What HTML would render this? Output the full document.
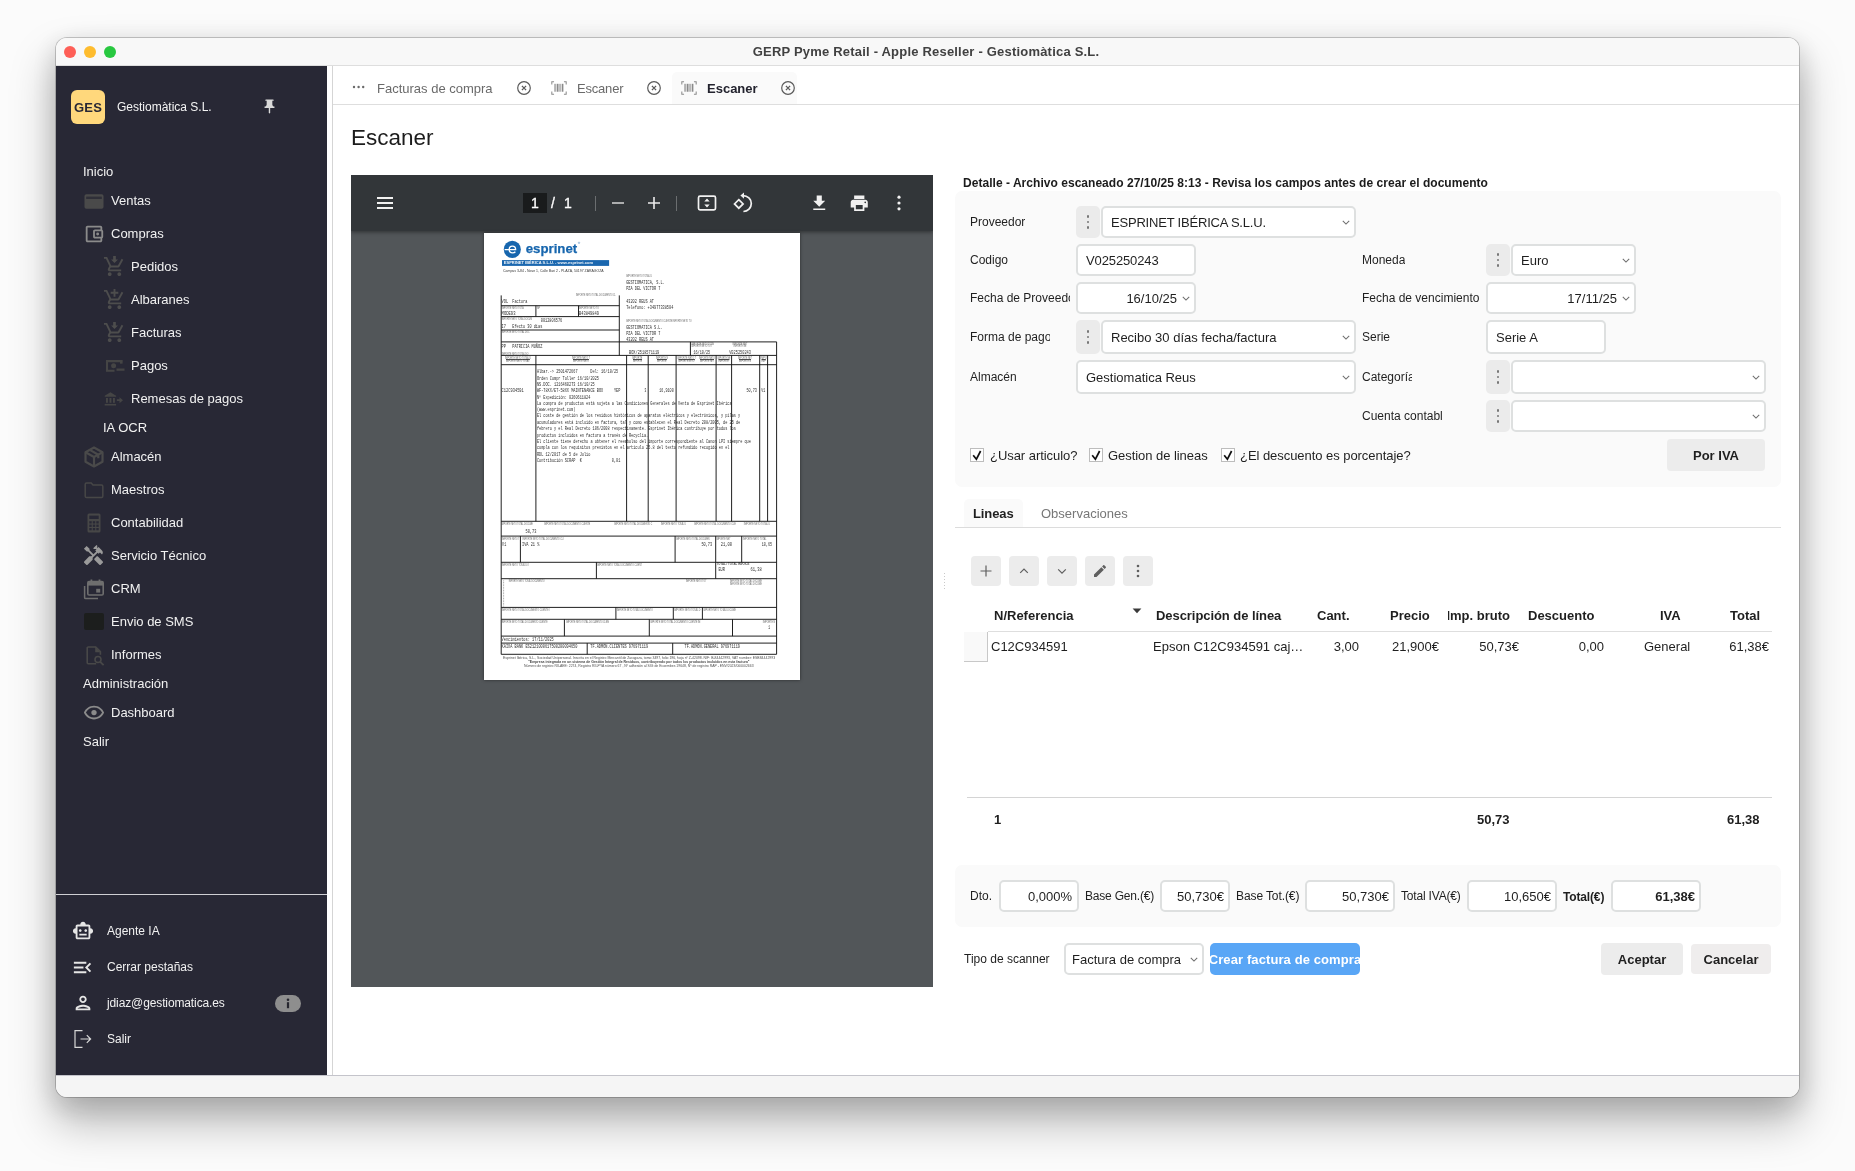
<!DOCTYPE html>
<html lang="es">
<head>
<meta charset="utf-8">
<title>GERP Pyme Retail - Apple Reseller - Gestiomàtica S.L.</title>
<style>
*{box-sizing:border-box;margin:0;padding:0}
html,body{width:1855px;height:1171px;overflow:hidden;background:#fbfbfb;font-family:"Liberation Sans",sans-serif;color:#1f1f1f;font-size:13px}
.abs{position:absolute}
#win{position:absolute;left:56px;top:38px;width:1743px;height:1059px;border-radius:11px;background:#fff;will-change:transform;
 box-shadow:0 0 0 1px rgba(0,0,0,.20),0 24px 44px 2px rgba(0,0,0,.27),0 8px 26px 3px rgba(0,0,0,.12);overflow:hidden}
#titlebar{position:absolute;left:0;top:0;width:100%;height:28px;background:#f8f8f8;border-bottom:1px solid #dedede}
#titlebar .t{position:absolute;left:0;right:3px;top:6px;text-align:center;font-weight:bold;font-size:13px;letter-spacing:.2px;color:#414141}
.tl{position:absolute;top:8px;width:12px;height:12px;border-radius:50%}
#side{position:absolute;left:0;top:28px;width:271px;height:1009px;background:#282835;color:#f1f1f1}
#status{position:absolute;left:0;top:1037px;width:100%;height:22px;background:#f5f5f5;border-top:1px solid #c4c4cb}
#vsep{position:absolute;left:276px;top:28px;width:1px;height:1009px;background:#d5d5d5}
.mi{position:absolute;left:27px;font-size:13px;white-space:nowrap;color:#f1f1f1}
.ic{position:absolute}
.bi{position:absolute;left:51px;font-size:12px;white-space:nowrap;color:#f1f1f1}
</style>
</head>
<body>
<div id="win">
<div id="titlebar">
 <div class="tl" style="left:8px;background:#fe5f57"></div>
 <div class="tl" style="left:28px;background:#febc2e"></div>
 <div class="tl" style="left:48px;background:#28c840"></div>
 <div class="t">GERP Pyme Retail - Apple Reseller - Gestiomàtica S.L.</div>
</div>
<div id="side">
 <div class="abs" style="left:15px;top:24px;width:34px;height:34px;border-radius:6px;background:#ffd87c;color:#282835;font-weight:bold;font-size:13px;text-align:center;line-height:35px;letter-spacing:.2px">GES</div>
 <div class="abs" style="left:61px;top:34px;font-size:12px;line-height:15px;color:#f4f4f4;white-space:nowrap">Gestiomàtica S.L.</div>
 <svg class="ic" style="left:205px;top:32px" width="17" height="17" viewBox="0 0 24 24"><path fill="#d9d9d9" d="M16,9V4l1,0c0.550,0,1-0.450,1-1v0c0-0.550-0.450-1-1-1H7C6.450,2,6,2.450,6,3v0c0,0.550,0.450,1,1,1l1,0v5c0,1.660-1.340,3-3,3h0v2h5.970v7l1,1l1-1v-7H19v-2h0C17.340,12,16,10.660,16,9z"/></svg>

 <div class="mi" style="top:98px;line-height:16px">Inicio</div>

 <!-- Ventas -->
 <svg class="ic" style="left:28px;top:128px" width="20" height="15" viewBox="0 0 20 15"><rect x=".5" y=".3" width="19" height="14.4" rx="1.8" fill="#4a4a4a"/><rect x="2.2" y="2.6" width="15.6" height="2.4" fill="#2f2f38"/></svg>
 <div class="mi" style="left:55px;top:127px;line-height:16px">Ventas</div>

 <!-- Compras -->
 <svg class="ic" style="left:27px;top:157px" width="22" height="22" viewBox="0 0 24 24"><path fill="#8b8b8b" d="M21 7.280V5c0-1.100-.9-2-2-2H5c-1.110 0-2 .9-2 2v14c0 1.100.890 2 2 2h14c1.100 0 2-.9 2-2v-2.280c.590-.350 1-.980 1-1.720V9c0-.740-.410-1.370-1-1.720zM20 9v6h-7V9h7zM5 19V5h14v2h-6c-1.100 0-2 .9-2 2v6c0 1.100.9 2 2 2h6v2H5z"/><circle cx="16" cy="12" r="1.600" fill="#8b8b8b"/></svg>
 <div class="mi" style="left:55px;top:160px;line-height:16px">Compras</div>

 <!-- Pedidos -->
 <svg class="ic" style="left:47px;top:189px" width="23" height="23" viewBox="0 0 24 24"><g fill="#4d4d4d"><path d="M7 18c-1.100 0-1.990.9-1.990 2S5.900 22 7 22s2-.9 2-2-.9-2-2-2zm10 0c-1.100 0-1.990.9-1.990 2s.890 2 1.990 2 2-.9 2-2-.9-2-2-2zm-9.830-3.250l.03-.12.9-1.630h7.450c.750 0 1.410-.410 1.750-1.030l3.860-7.010L19.420 4h-.01l-1.100 2-2.760 5H8.530l-.13-.270L6.160 6l-.95-2-.94-2H1v2h2l3.600 7.590-1.350 2.450c-.160.280-.250.610-.250.960 0 1.100.9 2 2 2h12v-2H7.420c-.130 0-.250-.110-.250-.250z"/><path d="M10.600 1h2.800v3.600h2.200L12 8.400 8.400 4.600h2.200z"/></g></svg>
 <div class="mi" style="left:75px;top:193px;line-height:16px">Pedidos</div>

 <!-- Albaranes -->
 <svg class="ic" style="left:47px;top:222px" width="23" height="23" viewBox="0 0 24 24"><path fill="#4d4d4d" d="M11 9h2V6h3V4h-3V1h-2v3H8v2h3v3zm-4 9c-1.100 0-1.990.9-1.990 2S5.900 22 7 22s2-.9 2-2-.9-2-2-2zm10 0c-1.100 0-1.990.9-1.990 2s.890 2 1.990 2 2-.9 2-2-.9-2-2-2zm-9.830-3.250l.03-.12.9-1.630h7.450c.750 0 1.410-.410 1.750-1.030l3.860-7.010L19.420 4h-.01l-1.100 2-2.760 5H8.530l-.13-.270L6.160 6l-.95-2-.94-2H1v2h2l3.600 7.590-1.350 2.450c-.160.280-.250.610-.250.960 0 1.100.9 2 2 2h12v-2H7.420c-.130 0-.250-.110-.250-.250z"/></svg>
 <div class="mi" style="left:75px;top:226px;line-height:16px">Albaranes</div>

 <!-- Facturas -->
 <svg class="ic" style="left:47px;top:255px" width="23" height="23" viewBox="0 0 24 24"><g fill="#4d4d4d"><path d="M7 18c-1.100 0-1.990.9-1.990 2S5.900 22 7 22s2-.9 2-2-.9-2-2-2zm10 0c-1.100 0-1.990.9-1.990 2s.890 2 1.990 2 2-.9 2-2-.9-2-2-2zm-9.830-3.250l.03-.12.9-1.630h7.450c.750 0 1.410-.410 1.750-1.030l3.860-7.010L19.420 4h-.01l-1.100 2-2.760 5H8.530l-.13-.270L6.160 6l-.95-2-.94-2H1v2h2l3.600 7.590-1.350 2.450c-.160.280-.250.610-.250.960 0 1.100.9 2 2 2h12v-2H7.420c-.130 0-.250-.110-.250-.250z"/><path d="M10.600 1h2.800v3.600h2.200L12 8.400 8.400 4.600h2.200z"/></g></svg>
 <div class="mi" style="left:75px;top:259px;line-height:16px">Facturas</div>

 <!-- Pagos -->
 <svg class="ic" style="left:49px;top:293px" width="20" height="14" viewBox="0 0 20 14"><g fill="none" stroke="#454545" stroke-width="2.100"><path d="M17.200 2.100H2v9.600h7.500"/></g><circle cx="8.600" cy="6.800" r="2.500" fill="#454545"/><rect x="15" y="1.050" width="2.600" height="3.600" fill="#454545"/><rect x="11.500" y="9.500" width="8" height="2.300" fill="#454545"/></svg>
 <div class="mi" style="left:75px;top:292px;line-height:16px">Pagos</div>

 <!-- Remesas -->
 <svg class="ic" style="left:48px;top:325px" width="20" height="16" viewBox="0 0 20 16"><g fill="#454545"><path d="M6.400 1.200L.7 4.700v1.100h11.400V4.700z"/><rect x="2" y="7" width="1.900" height="4.800"/><rect x="5.500" y="7" width="1.900" height="4.800"/><rect x="9" y="7" width="1.900" height="4.800"/><rect x=".7" y="12.900" width="11.400" height="1.600"/><path d="M12.900 8.300h2.600V6.200l3.500 3-3.500 3v-2.100h-2.600z"/></g></svg>
 <div class="mi" style="left:75px;top:325px;line-height:16px">Remesas de pagos</div>

 <div class="mi" style="left:47px;top:354px;line-height:16px">IA OCR</div>

 <!-- Almacen -->
 <svg class="ic" style="left:26px;top:379px" width="24" height="24" viewBox="0 0 24 24"><g fill="none" stroke="#4a4a4a" stroke-width="2.200" stroke-linejoin="round"><path d="M12 2.500l8.500 4.800v9.400L12 21.500l-8.500-4.800V7.300z"/><path d="M3.500 7.300L12 12l8.500-4.700M12 12v9.500M7.800 4.900l8.500 4.800v3.500"/></g></svg>
 <div class="mi" style="left:55px;top:383px;line-height:16px">Almacén</div>

 <!-- Maestros -->
 <svg class="ic" style="left:28px;top:415px" width="20" height="18" viewBox="0 0 20 18"><path fill="none" stroke="#474747" stroke-width="1.500" d="M1.200 15.200V3.300c0-.7.500-1.200 1.200-1.200h4.800l1.800 1.900h8.600c.7 0 1.200.5 1.200 1.200v10c0 .7-.5 1.200-1.200 1.200H2.400c-.7 0-1.200-.5-1.200-1.200z"/></svg>
 <div class="mi" style="left:55px;top:416px;line-height:16px">Maestros</div>

 <!-- Contabilidad -->
 <svg class="ic" style="left:31px;top:447px" width="14" height="20" viewBox="0 0 14 20"><rect x=".5" y=".5" width="13" height="19" rx="1.500" fill="#474747"/><g fill="#282835"><rect x="2.300" y="2.600" width="9.400" height="3.400"/><rect x="2.300" y="8.200" width="2.400" height="2.300"/><rect x="5.800" y="8.200" width="2.400" height="2.300"/><rect x="9.300" y="8.200" width="2.400" height="2.300"/><rect x="2.300" y="11.600" width="2.400" height="2.300"/><rect x="5.800" y="11.600" width="2.400" height="2.300"/><rect x="9.300" y="11.600" width="2.400" height="2.300"/><rect x="2.300" y="15" width="2.400" height="2.300"/><rect x="5.800" y="15" width="2.400" height="2.300"/><rect x="9.300" y="15" width="2.400" height="2.300"/></g></svg>
 <div class="mi" style="left:55px;top:449px;line-height:16px">Contabilidad</div>

 <!-- Servicio Tecnico -->
 <svg class="ic" style="left:26px;top:478px" width="23" height="23" viewBox="0 0 24 24"><g fill="#9a9a9a"><path d="M21.670 18.170l-5.300-5.300h-.99l-2.540 2.540v.99l5.300 5.300c.39.39 1.020.39 1.410 0l2.120-2.120c.39-.38.390-1.020 0-1.410z"/><path d="M17.340 10.190l1.410-1.410 2.120 2.120c1.170-1.170 1.170-3.070 0-4.240l-3.540-3.540-1.410 1.410V1.710l-.7-.71-3.540 3.540.71.710h2.830l-1.410 1.410 1.060 1.060-2.890 2.890-4.130-4.130V5.060L4.830 2.040 2 4.870l3.030 3.030h1.410l4.130 4.130-.85.850H7.600l-5.300 5.300c-.39.39-.39 1.020 0 1.410l2.120 2.120c.39.39 1.020.39 1.410 0l5.300-5.300v-2.120l5.150-5.150 1.060 1.050z"/></g></svg>
 <div class="mi" style="left:55px;top:482px;line-height:16px">Servicio Técnico</div>

 <!-- CRM -->
 <svg class="ic" style="left:27px;top:512px" width="22" height="22" viewBox="0 0 22 22"><g fill="none" stroke="#6e6e6e" stroke-width="1.600"><rect x="4.800" y="3.600" width="15.400" height="13.400" rx="1.300"/><path d="M1.600 8v11.400c0 .6.500 1.100 1.100 1.100H15" stroke-width="1.500"/></g><path d="M4.800 3.600h15.400v4H4.800z" fill="#6e6e6e"/><rect x="7.500" y="1.500" width="1.800" height="3" fill="#6e6e6e"/><rect x="15.600" y="1.500" width="1.800" height="3" fill="#6e6e6e"/><rect x="13.200" y="10.800" width="4" height="3.800" fill="#6e6e6e"/></svg>
 <div class="mi" style="left:55px;top:515px;line-height:16px">CRM</div>

 <!-- SMS -->
 <div class="abs" style="left:28px;top:547px;width:20px;height:17px;border-radius:2px;background:#1c1e1d"></div>
 <div class="mi" style="left:55px;top:548px;line-height:16px">Envio de SMS</div>

 <!-- Informes -->
 <svg class="ic" style="left:29px;top:579px" width="20" height="22" viewBox="0 0 20 22"><g fill="none" stroke="#484848" stroke-width="1.600"><path d="M11.200 18.700H3.300c-.6 0-1.100-.5-1.100-1.100V3.100c0-.6.500-1.100 1.100-1.100h7.400l4.700 4.700v3"/><circle cx="13" cy="14.500" r="3"/><path d="M15.200 16.800l3.400 3.400" stroke-width="1.800"/></g><path d="M10.200 2v5.200h5.200z" fill="#484848"/></svg>
 <div class="mi" style="left:55px;top:581px;line-height:16px">Informes</div>

 <div class="mi" style="top:610px;line-height:16px">Administración</div>

 <!-- Dashboard -->
 <svg class="ic" style="left:27px;top:636px" width="22" height="22" viewBox="0 0 24 24"><path fill="#8b8b8b" d="M12 6c3.790 0 7.170 2.130 8.820 5.500C19.170 14.870 15.790 17 12 17s-7.170-2.130-8.820-5.500C4.830 8.130 8.210 6 12 6m0-2C7 4 2.730 7.110 1 11.500 2.730 15.890 7 19 12 19s9.270-3.110 11-7.500C21.270 7.110 17 4 12 4z"/><circle cx="12" cy="11.500" r="2.900" fill="#8b8b8b"/></svg>
 <div class="mi" style="left:55px;top:639px;line-height:16px">Dashboard</div>

 <div class="mi" style="top:668px;line-height:16px">Salir</div>

 <div class="abs" style="left:0;top:828px;width:271px;height:1px;background:#cfcfd3"></div>

 <!-- bottom -->
 <svg class="ic" style="left:16px;top:854px" width="22" height="22" viewBox="0 0 24 24"><path fill="#e6e6e6" d="M20 9V7c0-1.100-.9-2-2-2h-3c0-1.660-1.340-3-3-3S9 3.340 9 5H6c-1.100 0-2 .9-2 2v2c-1.660 0-3 1.340-3 3s1.340 3 3 3v4c0 1.100.9 2 2 2h12c1.100 0 2-.9 2-2v-4c1.660 0 3-1.340 3-3s-1.340-3-3-3zm-2 10H6V7h12v12zm-9-6c-.830 0-1.500-.670-1.500-1.500S8.170 10 9 10s1.500.670 1.500 1.500S9.830 13 9 13zm7.500-1.500c0 .830-.670 1.500-1.500 1.500s-1.500-.670-1.500-1.500.670-1.500 1.500-1.500 1.500.670 1.500 1.500zM8 15h8v2H8v-2z"/></svg>
 <div class="bi" style="top:857px;line-height:16px">Agente IA</div>

 <svg class="ic" style="left:15px;top:890px" width="23" height="23" viewBox="0 0 24 24"><path fill="#e6e6e6" d="M3 18h13v-2H3v2zm0-5h10v-2H3v2zm0-7v2h13V6H3zm18 9.590L17.420 12 21 8.410 19.590 7l-5 5 5 5L21 15.590z"/></svg>
 <div class="bi" style="top:893px;line-height:16px">Cerrar pestañas</div>

 <svg class="ic" style="left:16px;top:926px" width="22" height="22" viewBox="0 0 24 24"><path fill="#e6e6e6" d="M12 6c1.100 0 2 .9 2 2s-.9 2-2 2-2-.9-2-2 .9-2 2-2m0 10c2.700 0 5.800 1.290 6 2H6c.230-.720 3.310-2 6-2m0-12C9.790 4 8 5.790 8 8s1.790 4 4 4 4-1.790 4-4-1.790-4-4-4zm0 10c-2.670 0-8 1.340-8 4v2h16v-2c0-2.660-5.330-4-8-4z"/></svg>
 <div class="bi" style="top:929px;line-height:16px;letter-spacing:-.12px">jdiaz@gestiomatica.es</div>
 <div class="abs" style="left:219px;top:929px;width:26px;height:17px;border-radius:9px;background:#8e8e8e"></div>
 <svg class="ic" style="left:229px;top:932px" width="6" height="11" viewBox="0 0 6 11"><circle cx="3" cy="1.700" r="1.300" fill="#26262f"/><rect x="1.900" y="4.200" width="2.200" height="6" fill="#26262f"/></svg>

 <svg class="ic" style="left:17px;top:963px" width="20" height="20" viewBox="0 0 20 20"><g fill="none" stroke="#d8d8d8" stroke-width="1.200"><path d="M9.500 1.600H2v16.800h7.500"/><path d="M7.500 10h10M13.800 6.200l3.800 3.800-3.800 3.800"/></g></svg>
 <div class="bi" style="top:965px;line-height:16px">Salir</div>
</div>
<div id="vsep"></div>
<div id="A" style="position:absolute;left:-56px;top:-38px;width:1855px;height:1171px">
<style>
.tabt{position:absolute;top:81px;font-size:13px;line-height:16px;color:#6a6a6a;white-space:nowrap}
.lbl{position:absolute;font-size:12px;line-height:16px;color:#1f1f1f;white-space:nowrap;overflow:hidden}
.inp{position:absolute;background:#fff;border:1px solid #dcdcdc;border-radius:4px;box-shadow:0 0 0 1px #ebebeb;font-size:13px;line-height:16px;color:#1f1f1f;white-space:nowrap;overflow:hidden}
.inp span{position:absolute;top:7px}
.dotb{position:absolute;width:24px;background:#ececec;border-radius:4px}
.btn{position:absolute;background:#ececec;border-radius:4px;font-weight:bold;font-size:13px;text-align:center;color:#1f1f1f;white-space:nowrap;overflow:hidden}
.th{position:absolute;top:608px;font-weight:bold;font-size:13px;line-height:16px;white-space:nowrap;color:#1f1f1f}
.td{position:absolute;top:639px;font-size:13px;line-height:16px;white-space:nowrap;color:#1f1f1f}
</style>
<!-- tab bar -->
<div class="abs" style="left:333px;top:104px;width:1466px;height:1px;background:#dedede"></div>
<svg class="abs" style="left:352px;top:85px" width="14" height="4" viewBox="0 0 14 4"><circle cx="2" cy="2" r="1.200" fill="#6a6a6a"/><circle cx="6.600" cy="2" r="1.200" fill="#6a6a6a"/><circle cx="11.200" cy="2" r="1.200" fill="#6a6a6a"/></svg>
<div class="tabt" style="left:377px">Facturas de compra</div>
<svg class="abs" style="left:516px;top:80px" width="16" height="16" viewBox="0 0 16 16"><circle cx="8" cy="8" r="6.300" fill="none" stroke="#5a5a5a" stroke-width="1.200"/><path d="M5.900 5.900l4.200 4.200M10.100 5.900l-4.200 4.200" stroke="#5a5a5a" stroke-width="1.300"/></svg>
<svg class="abs" style="left:551px;top:80.500px" width="16" height="14" viewBox="0 0 17 15"><g fill="none" stroke="#8a8a8a" stroke-width="1.100"><path d="M3.200 .8H.8v3M13.800 .8h2.400v3M3.200 14.200H.8v-3M13.800 14.200h2.400v-3"/></g><g fill="#8a8a8a"><rect x="3.600" y="3" width="1.300" height="8.500"/><rect x="6" y="3" width="2" height="8.500"/><rect x="9" y="3" width="1.200" height="8.500"/><rect x="11.400" y="3" width="1.800" height="8.500"/></g></svg>
<div class="tabt" style="left:577px;letter-spacing:-.2px">Escaner</div>
<svg class="abs" style="left:646px;top:80px" width="16" height="16" viewBox="0 0 16 16"><circle cx="8" cy="8" r="6.300" fill="none" stroke="#5a5a5a" stroke-width="1.200"/><path d="M5.900 5.900l4.200 4.200M10.100 5.900l-4.200 4.200" stroke="#5a5a5a" stroke-width="1.300"/></svg>
<div class="abs" style="left:672px;top:72px;width:125px;height:32px;background:#fafafa;border-radius:5px 5px 0 0"></div>
<svg class="abs" style="left:681px;top:80.500px" width="16" height="14" viewBox="0 0 17 15"><g fill="none" stroke="#8a8a8a" stroke-width="1.100"><path d="M3.200 .8H.8v3M13.800 .8h2.400v3M3.200 14.200H.8v-3M13.800 14.200h2.400v-3"/></g><g fill="#8a8a8a"><rect x="3.600" y="3" width="1.300" height="8.500"/><rect x="6" y="3" width="2" height="8.500"/><rect x="9" y="3" width="1.200" height="8.500"/><rect x="11.400" y="3" width="1.800" height="8.500"/></g></svg>
<div class="tabt" style="left:707px;font-weight:bold;color:#23232e">Escaner</div>
<svg class="abs" style="left:780px;top:80px" width="16" height="16" viewBox="0 0 16 16"><circle cx="8" cy="8" r="6.300" fill="none" stroke="#5a5a5a" stroke-width="1.200"/><path d="M5.900 5.900l4.200 4.200M10.100 5.900l-4.200 4.200" stroke="#5a5a5a" stroke-width="1.300"/></svg>

<div class="abs" style="left:351px;top:123.500px;font-size:22.500px;line-height:28px;color:#1c1c1c;white-space:nowrap">Escaner</div>

<!-- PDF viewer -->
<div class="abs" style="left:351px;top:175px;width:582px;height:812px;background:#525659;overflow:hidden">
 <div class="abs" style="left:0;top:0;width:582px;height:56px;background:#323639;box-shadow:0 1px 4px rgba(0,0,0,.45)"></div>
 <!-- hamburger -->
 <div class="abs" style="left:26px;top:22px;width:16px;height:2px;background:#f1f1f1"></div>
 <div class="abs" style="left:26px;top:27px;width:16px;height:2px;background:#f1f1f1"></div>
 <div class="abs" style="left:26px;top:32px;width:16px;height:2px;background:#f1f1f1"></div>
 <!-- page no -->
 <div class="abs" style="left:172px;top:18px;width:24px;height:20px;background:#191b1c;color:#fff;font-size:14px;line-height:20px;text-align:center;-webkit-text-stroke:.3px #fff">1</div>
 <div class="abs" style="left:200px;top:18px;color:#fff;font-size:14px;line-height:20px;-webkit-text-stroke:.3px #fff">/</div>
 <div class="abs" style="left:213px;top:18px;color:#fff;font-size:14px;line-height:20px;-webkit-text-stroke:.3px #fff">1</div>
 <div class="abs" style="left:244px;top:21px;width:1px;height:15px;background:#6b6e70"></div>
 <svg class="abs" style="left:258px;top:19px" width="18" height="18" viewBox="0 0 18 18"><path d="M3 9h12" stroke="#d6d6d6" stroke-width="1.600" fill="none"/></svg>
 <svg class="abs" style="left:294px;top:19px" width="18" height="18" viewBox="0 0 18 18"><path d="M3 9h12M9 3v12" stroke="#ececec" stroke-width="1.600" fill="none"/></svg>
 <div class="abs" style="left:325px;top:21px;width:1px;height:15px;background:#6b6e70"></div>
 <!-- fit -->
 <svg class="abs" style="left:346px;top:19px" width="20" height="18" viewBox="0 0 20 18"><rect x="1.500" y="2.200" width="17" height="13.600" rx="1.500" fill="none" stroke="#f1f1f1" stroke-width="1.700"/><path d="M10 4.400l2.700 3.100H7.300zM10 13.600l2.700-3.100H7.300z" fill="#f1f1f1"/></svg>
 <!-- rotate -->
 <svg class="abs" style="left:382px;top:17px" width="20" height="22" viewBox="0 0 20 22"><g fill="none" stroke="#f1f1f1" stroke-width="1.700"><path d="M5.800 7.600l4.300 4.300-4.300 4.300-4.300-4.300z"/><path d="M10 3.600c4.600 0 8.300 3.500 8.300 7.900 0 4.300-3.500 7.800-7.900 8"/></g><path d="M11 .4v6.400L7.400 3.600z" fill="#f1f1f1"/></svg>
 <!-- download -->
 <svg class="abs" style="left:457.500px;top:17.500px" width="20.500" height="20.500" viewBox="0 0 24 24"><path fill="#f1f1f1" d="M19 9h-4V3H9v6H5l7 7 7-7zM5 18v2h14v-2H5z"/></svg>
 <!-- print -->
 <svg class="abs" style="left:498px;top:17.500px" width="20.500" height="20.500" viewBox="0 0 24 24"><path fill="#f1f1f1" d="M19 8H5c-1.660 0-3 1.340-3 3v6h4v4h12v-4h4v-6c0-1.660-1.340-3-3-3zm-3 11H8v-5h8v5zm3-7c-.550 0-1-.450-1-1s.450-1 1-1 1 .450 1 1-.450 1-1 1zm-1-9H6v4h12V3z"/></svg>
 <!-- more -->
 <svg class="abs" style="left:545px;top:20px" width="6" height="16" viewBox="0 0 6 16"><circle cx="3" cy="2.200" r="1.600" fill="#f1f1f1"/><circle cx="3" cy="8" r="1.600" fill="#f1f1f1"/><circle cx="3" cy="13.800" r="1.600" fill="#f1f1f1"/></svg>
 <!-- page -->
 <div class="abs" style="left:133px;top:58px;width:316px;height:447px;background:#fff;box-shadow:0 0 3px rgba(0,0,0,.5)"></div>
<svg class="abs" style="left:133px;top:58px" width="316" height="447" viewBox="484 233 316 447"><path d="M501.2 295.4V654.3M619.3 295.4V355.4M501.2 305.7H619.3M535.9 305.7V316.6M578.5 305.7V316.6M501.2 316.6H619.3M501.2 330.0H619.3M501.2 341.9H776.6M690.4 341.9V355.4M776.6 341.9V654.3M501.2 355.4H776.6M535.9 355.4V521.3M626.6 355.4V521.3M648.2 355.4V521.3M676.1 355.4V521.3M716.1 355.4V521.3M731.6 355.4V521.3M759.7 355.4V521.3M767.6 355.4V521.3M501.2 364.7H776.6M501.2 521.3H776.6M501.2 536.1H776.6M501.2 562.3H776.6M501.2 578.7H776.6M501.2 607.4H776.6M501.2 619.3H776.6M501.2 636.1H776.6M501.2 643.1H776.6M501.2 654.3H776.6M520.4 536.1V562.3M675.1 536.1V562.3M715.7 536.1V562.3M741.7 536.1V562.3M596.4 562.3V578.7M715.7 562.3V578.7M615.9 607.4V619.3M673.3 607.4V619.3M702.4 607.4V619.3M564.4 619.3V636.1M649.3 619.3V636.1M732.5 619.3V636.1M587.2 643.1V654.3M672.7 643.1V654.3" stroke="#141414" stroke-width=".95" fill="none"/><circle cx="512.3" cy="249.4" r="8.55" fill="#1766ae"/><path d="M504.6 249.6h11c0-2.300-1.400-3.500-3.200-3.500-1.900 0-3.200 1.400-3.200 3.400 0 2.100 1.400 3.400 3.400 3.400 1.300 0 2.200-.5 2.800-1.200" fill="none" stroke="#fff" stroke-width="1.350"/><text x="525.7" y="253.1" font-family="Liberation Sans" font-weight="bold" font-size="13.6" fill="#1766ae" stroke="#1766ae" stroke-width=".25" textLength="51.5" lengthAdjust="spacingAndGlyphs">esprinet</text><circle cx="579" cy="242.8" r=".75" fill="none" stroke="#1766ae" stroke-width=".35"/><rect x="502" y="260.1" width="107.1" height="5.8" fill="#1a67af"/><text xml:space="preserve" x="503.8" y="264.3" font-family="Liberation Sans" font-size="3.6" fill="#fff" fill-opacity="0.92" textLength="89.2" lengthAdjust="spacingAndGlyphs" font-weight="bold">ESPRINET IBÉRICA S.L.U. - www.esprinet.com</text><text xml:space="preserve" x="503.1" y="271.5" font-family="Liberation Sans" font-size="3.2" fill="#222" fill-opacity="0.9" textLength="100.6" lengthAdjust="spacingAndGlyphs">Campus 3-84 - Nave 1, Calle Bari 2 - PLAZA, 50197 ZARAGOZA</text><text xml:space="preserve" x="626.2" y="277.3" font-family="Liberation Sans" font-size="2.6" fill="#222" fill-opacity="0.72" textLength="25.8" lengthAdjust="spacingAndGlyphs">IMPORTE NETO TOTAL D</text><text xml:space="preserve" x="626.2" y="284.0" font-family="Liberation Mono" font-size="4.6" fill="#1c1c1c" fill-opacity="0.95" textLength="38.5" lengthAdjust="spacingAndGlyphs">GESTIOMATICA, S.L.</text><text xml:space="preserve" x="626.2" y="289.5" font-family="Liberation Mono" font-size="4.6" fill="#1c1c1c" fill-opacity="0.95" textLength="34.2" lengthAdjust="spacingAndGlyphs">PZA DEL VICTOR 7</text><text xml:space="preserve" x="626.2" y="302.6" font-family="Liberation Mono" font-size="4.6" fill="#1c1c1c" fill-opacity="0.95" textLength="27.8" lengthAdjust="spacingAndGlyphs">43202 REUS AT</text><text xml:space="preserve" x="626.2" y="308.7" font-family="Liberation Mono" font-size="4.6" fill="#1c1c1c" fill-opacity="0.95" textLength="47.1" lengthAdjust="spacingAndGlyphs">Telefono: +34977338504</text><text xml:space="preserve" x="626.2" y="321.9" font-family="Liberation Sans" font-size="2.6" fill="#222" fill-opacity="0.72" textLength="65.4" lengthAdjust="spacingAndGlyphs">IMPORTE NETO TOTAL DOCUMENTO CLIENTE IMPORTE NETO TO</text><text xml:space="preserve" x="626.2" y="329.1" font-family="Liberation Mono" font-size="4.6" fill="#1c1c1c" fill-opacity="0.95" textLength="36.4" lengthAdjust="spacingAndGlyphs">GESTIOMATICA S.L.</text><text xml:space="preserve" x="626.2" y="335.2" font-family="Liberation Mono" font-size="4.6" fill="#1c1c1c" fill-opacity="0.95" textLength="34.2" lengthAdjust="spacingAndGlyphs">PZA DEL VICTOR 7</text><text xml:space="preserve" x="626.2" y="341.3" font-family="Liberation Mono" font-size="4.6" fill="#1c1c1c" fill-opacity="0.95" textLength="27.8" lengthAdjust="spacingAndGlyphs">43202 REUS AT</text><text xml:space="preserve" x="576.0" y="295.6" font-family="Liberation Sans" font-size="2.6" fill="#222" fill-opacity="0.72" textLength="39.7" lengthAdjust="spacingAndGlyphs">IMPORTE NETO TOTAL DOCUMENTO CL</text><text xml:space="preserve" x="501.6" y="302.8" font-family="Liberation Mono" font-size="4.6" fill="#1c1c1c" fill-opacity="0.95" textLength="25.7" lengthAdjust="spacingAndGlyphs">VOL  Factura</text><text xml:space="preserve" x="501.8" y="309.2" font-family="Liberation Sans" font-size="2.6" fill="#222" fill-opacity="0.72" textLength="21.8" lengthAdjust="spacingAndGlyphs">IMPORTE NETO TOTA</text><text xml:space="preserve" x="536.9" y="309.2" font-family="Liberation Sans" font-size="2.6" fill="#222" fill-opacity="0.72" textLength="3.1" lengthAdjust="spacingAndGlyphs">IMP</text><text xml:space="preserve" x="579.0" y="309.2" font-family="Liberation Sans" font-size="2.6" fill="#222" fill-opacity="0.72" textLength="19.9" lengthAdjust="spacingAndGlyphs">IMPORTE NETO TO</text><text xml:space="preserve" x="501.6" y="315.1" font-family="Liberation Mono" font-size="4.6" fill="#1c1c1c" fill-opacity="0.95" textLength="13.9" lengthAdjust="spacingAndGlyphs">MODE93</text><text xml:space="preserve" x="579.0" y="315.1" font-family="Liberation Mono" font-size="4.6" fill="#1c1c1c" fill-opacity="0.95" textLength="19.9" lengthAdjust="spacingAndGlyphs">B43849849</text><text xml:space="preserve" x="501.8" y="319.7" font-family="Liberation Sans" font-size="2.6" fill="#222" fill-opacity="0.72" textLength="30.1" lengthAdjust="spacingAndGlyphs">IMPORTE NETO TOTAL DOCUM</text><text xml:space="preserve" x="540.8" y="321.6" font-family="Liberation Mono" font-size="4.6" fill="#1c1c1c" fill-opacity="0.95" textLength="21.4" lengthAdjust="spacingAndGlyphs">0012806576</text><text xml:space="preserve" x="501.6" y="328.4" font-family="Liberation Mono" font-size="4.6" fill="#1c1c1c" fill-opacity="0.95" textLength="40.7" lengthAdjust="spacingAndGlyphs">I7   Efecto 30 dias</text><text xml:space="preserve" x="501.8" y="333.2" font-family="Liberation Sans" font-size="2.6" fill="#222" fill-opacity="0.72" textLength="27.7" lengthAdjust="spacingAndGlyphs">IMPORTE NETO TOTAL DOC</text><text xml:space="preserve" x="501.6" y="347.6" font-family="Liberation Mono" font-size="4.6" fill="#1c1c1c" fill-opacity="0.95" textLength="40.7" lengthAdjust="spacingAndGlyphs">PP   PATRICIA MUÑOZ</text><text xml:space="preserve" x="501.8" y="354.6" font-family="Liberation Sans" font-size="2.6" fill="#222" fill-opacity="0.72" textLength="26.7" lengthAdjust="spacingAndGlyphs">IMPORTE NETO TOTAL DO</text><text xml:space="preserve" x="691.4" y="345.3" font-family="Liberation Sans" font-size="2.6" fill="#222" fill-opacity="0.72" textLength="22.4" lengthAdjust="spacingAndGlyphs">IMPORTE NETO TOTA</text><text xml:space="preserve" x="691.4" y="347.2" font-family="Liberation Sans" font-size="2.6" fill="#222" fill-opacity="0.72" textLength="20.6" lengthAdjust="spacingAndGlyphs">IMPORTE NETO TOT</text><text xml:space="preserve" x="732.6" y="345.3" font-family="Liberation Sans" font-size="2.6" fill="#222" fill-opacity="0.72" textLength="14.8" lengthAdjust="spacingAndGlyphs">IMPORTE NET</text><text xml:space="preserve" x="733.6" y="347.2" font-family="Liberation Sans" font-size="2.6" fill="#222" fill-opacity="0.72" textLength="12.8" lengthAdjust="spacingAndGlyphs">IMPORTE NE</text><text xml:space="preserve" x="629.0" y="353.5" font-family="Liberation Mono" font-size="4.6" fill="#1c1c1c" fill-opacity="0.95" textLength="30.3" lengthAdjust="spacingAndGlyphs">BOX/2518571119</text><text xml:space="preserve" x="693.4" y="353.5" font-family="Liberation Mono" font-size="4.6" fill="#1c1c1c" fill-opacity="0.95" textLength="16.8" lengthAdjust="spacingAndGlyphs">16/10/25</text><text xml:space="preserve" x="729.2" y="353.5" font-family="Liberation Mono" font-size="4.6" fill="#1c1c1c" fill-opacity="0.95" textLength="21.8" lengthAdjust="spacingAndGlyphs">V025250243</text><text xml:space="preserve" x="505.0" y="359.1" font-family="Liberation Sans" font-size="2.6" fill="#222" fill-opacity="0.72" textLength="26.0" lengthAdjust="spacingAndGlyphs">IMPORTE NETO TOTAL D</text><text xml:space="preserve" x="506.0" y="362.4" font-family="Liberation Sans" font-size="2.6" fill="#222" fill-opacity="0.67" textLength="24.0" lengthAdjust="spacingAndGlyphs">IMPORTE NETO TOTAL </text><rect x="506.0" y="359.2" width="24.0" height=".9" fill="#111" fill-opacity=".85"/><text xml:space="preserve" x="572.0" y="359.1" font-family="Liberation Sans" font-size="2.6" fill="#222" fill-opacity="0.72" textLength="18.0" lengthAdjust="spacingAndGlyphs">IMPORTE NETO T</text><text xml:space="preserve" x="573.0" y="362.4" font-family="Liberation Sans" font-size="2.6" fill="#222" fill-opacity="0.67" textLength="16.0" lengthAdjust="spacingAndGlyphs">IMPORTE NETO</text><rect x="573.0" y="359.2" width="16.0" height=".9" fill="#111" fill-opacity=".85"/><text xml:space="preserve" x="632.0" y="359.1" font-family="Liberation Sans" font-size="2.6" fill="#222" fill-opacity="0.72" textLength="11.0" lengthAdjust="spacingAndGlyphs">IMPORTE </text><text xml:space="preserve" x="633.0" y="362.4" font-family="Liberation Sans" font-size="2.6" fill="#222" fill-opacity="0.67" textLength="9.0" lengthAdjust="spacingAndGlyphs">IMPORTE</text><rect x="633.0" y="359.2" width="9.0" height=".9" fill="#111" fill-opacity=".85"/><text xml:space="preserve" x="656.0" y="359.1" font-family="Liberation Sans" font-size="2.6" fill="#222" fill-opacity="0.72" textLength="12.0" lengthAdjust="spacingAndGlyphs">IMPORTE N</text><text xml:space="preserve" x="657.0" y="362.4" font-family="Liberation Sans" font-size="2.6" fill="#222" fill-opacity="0.67" textLength="10.0" lengthAdjust="spacingAndGlyphs">IMPORTE </text><rect x="657.0" y="359.2" width="10.0" height=".9" fill="#111" fill-opacity=".85"/><text xml:space="preserve" x="677.5" y="359.1" font-family="Liberation Sans" font-size="2.6" fill="#222" fill-opacity="0.72" textLength="18.5" lengthAdjust="spacingAndGlyphs">IMPORTE NETO T</text><text xml:space="preserve" x="678.5" y="362.4" font-family="Liberation Sans" font-size="2.6" fill="#222" fill-opacity="0.67" textLength="16.5" lengthAdjust="spacingAndGlyphs">IMPORTE NETO </text><rect x="678.5" y="359.2" width="16.5" height=".9" fill="#111" fill-opacity=".85"/><text xml:space="preserve" x="699.0" y="359.1" font-family="Liberation Sans" font-size="2.6" fill="#222" fill-opacity="0.72" textLength="16.0" lengthAdjust="spacingAndGlyphs">IMPORTE NETO</text><text xml:space="preserve" x="700.0" y="362.4" font-family="Liberation Sans" font-size="2.6" fill="#222" fill-opacity="0.67" textLength="14.0" lengthAdjust="spacingAndGlyphs">IMPORTE NET</text><rect x="700.0" y="359.2" width="14.0" height=".9" fill="#111" fill-opacity=".85"/><text xml:space="preserve" x="717.5" y="359.1" font-family="Liberation Sans" font-size="2.6" fill="#222" fill-opacity="0.72" textLength="13.0" lengthAdjust="spacingAndGlyphs">IMPORTE NE</text><text xml:space="preserve" x="718.5" y="362.4" font-family="Liberation Sans" font-size="2.6" fill="#222" fill-opacity="0.67" textLength="11.0" lengthAdjust="spacingAndGlyphs">IMPORTE </text><rect x="718.5" y="359.2" width="11.0" height=".9" fill="#111" fill-opacity=".85"/><text xml:space="preserve" x="738.0" y="359.1" font-family="Liberation Sans" font-size="2.6" fill="#222" fill-opacity="0.72" textLength="14.0" lengthAdjust="spacingAndGlyphs">IMPORTE NET</text><text xml:space="preserve" x="739.0" y="362.4" font-family="Liberation Sans" font-size="2.6" fill="#222" fill-opacity="0.67" textLength="12.0" lengthAdjust="spacingAndGlyphs">IMPORTE N</text><rect x="739.0" y="359.2" width="12.0" height=".9" fill="#111" fill-opacity=".85"/><text xml:space="preserve" x="760.6" y="359.1" font-family="Liberation Sans" font-size="2.6" fill="#222" fill-opacity="0.72" textLength="6.2" lengthAdjust="spacingAndGlyphs">IMPO</text><text xml:space="preserve" x="761.6" y="362.4" font-family="Liberation Sans" font-size="2.6" fill="#222" fill-opacity="0.67" textLength="4.2" lengthAdjust="spacingAndGlyphs">IMP</text><rect x="761.6" y="359.2" width="4.2" height=".9" fill="#111" fill-opacity=".85"/><text xml:space="preserve" x="536.9" y="372.5" font-family="Liberation Mono" font-size="4.6" fill="#1c1c1c" fill-opacity="0.95" textLength="81.3" lengthAdjust="spacingAndGlyphs">Albar.-&gt; 2501472667      Del: 16/10/25</text><text xml:space="preserve" x="536.9" y="379.5" font-family="Liberation Mono" font-size="4.6" fill="#1c1c1c" fill-opacity="0.95" textLength="62.1" lengthAdjust="spacingAndGlyphs">Orden Compr Toller 16/10/2025</text><text xml:space="preserve" x="536.9" y="385.8" font-family="Liberation Mono" font-size="4.6" fill="#1c1c1c" fill-opacity="0.95" textLength="57.8" lengthAdjust="spacingAndGlyphs">NS.DOC. 1216460273 16/10/25</text><text xml:space="preserve" x="536.9" y="391.9" font-family="Liberation Mono" font-size="4.6" fill="#1c1c1c" fill-opacity="0.95" textLength="83.5" lengthAdjust="spacingAndGlyphs">WF-78XX/ET-58XX MAINTENANCE BOX     YEP</text><text xml:space="preserve" x="536.9" y="398.5" font-family="Liberation Mono" font-size="4.6" fill="#1c1c1c" fill-opacity="0.95" textLength="53.5" lengthAdjust="spacingAndGlyphs">Nº Expedición: 0260611824</text><text xml:space="preserve" x="536.9" y="404.8" font-family="Liberation Mono" font-size="4.6" fill="#1c1c1c" fill-opacity="0.95" textLength="194.7" lengthAdjust="spacingAndGlyphs">La compra de productos está sujeta a las Condiciones Generales de Venta de Esprinet Ibérica</text><text xml:space="preserve" x="536.9" y="411.2" font-family="Liberation Mono" font-size="4.6" fill="#1c1c1c" fill-opacity="0.95" textLength="38.5" lengthAdjust="spacingAndGlyphs">(www.esprinet.com)</text><text xml:space="preserve" x="536.9" y="417.3" font-family="Liberation Mono" font-size="4.6" fill="#1c1c1c" fill-opacity="0.95" textLength="203.3" lengthAdjust="spacingAndGlyphs">El coste de gestión de los residuos históricos de aparatos eléctricos y electrónicos, y pilas y</text><text xml:space="preserve" x="536.9" y="423.6" font-family="Liberation Mono" font-size="4.6" fill="#1c1c1c" fill-opacity="0.95" textLength="203.3" lengthAdjust="spacingAndGlyphs">acumuladores está incluido en factura, tal y como establecen el Real Decreto 208/2005, de 25 de</text><text xml:space="preserve" x="536.9" y="430.2" font-family="Liberation Mono" font-size="4.6" fill="#1c1c1c" fill-opacity="0.95" textLength="199.0" lengthAdjust="spacingAndGlyphs">febrero y el Real Decreto 106/2008 respectivamente. Esprinet Ibérica contribuye por todos los</text><text xml:space="preserve" x="536.9" y="436.5" font-family="Liberation Mono" font-size="4.6" fill="#1c1c1c" fill-opacity="0.95" textLength="111.3" lengthAdjust="spacingAndGlyphs">productos incluidos en factura a través de Recyclia.</text><text xml:space="preserve" x="536.9" y="442.9" font-family="Liberation Mono" font-size="4.6" fill="#1c1c1c" fill-opacity="0.95" textLength="214.0" lengthAdjust="spacingAndGlyphs">El cliente tiene derecho a obtener el reembolso del importe correspondiente al Canon LPI siempre que</text><text xml:space="preserve" x="536.9" y="449.4" font-family="Liberation Mono" font-size="4.6" fill="#1c1c1c" fill-opacity="0.95" textLength="192.6" lengthAdjust="spacingAndGlyphs">cumpla con los requisitos previstos en el artículo 25.8 del texto refundido recogido en el</text><text xml:space="preserve" x="536.9" y="455.5" font-family="Liberation Mono" font-size="4.6" fill="#1c1c1c" fill-opacity="0.95" textLength="53.5" lengthAdjust="spacingAndGlyphs">RDL 12/2017 de 5 de Julio</text><text xml:space="preserve" x="536.9" y="462.2" font-family="Liberation Mono" font-size="4.6" fill="#1c1c1c" fill-opacity="0.95" textLength="83.5" lengthAdjust="spacingAndGlyphs">Contribución SCRAP  €              0,01</text><text xml:space="preserve" x="501.6" y="391.9" font-family="Liberation Mono" font-size="4.6" fill="#1c1c1c" fill-opacity="0.95" textLength="22.2" lengthAdjust="spacingAndGlyphs">C12C934591</text><text xml:space="preserve" x="644.4" y="391.9" font-family="Liberation Mono" font-size="4.6" fill="#1c1c1c" fill-opacity="0.95" textLength="1.8" lengthAdjust="spacingAndGlyphs">3</text><text xml:space="preserve" x="659.3" y="391.9" font-family="Liberation Mono" font-size="4.6" fill="#1c1c1c" fill-opacity="0.95" textLength="14.4" lengthAdjust="spacingAndGlyphs">16,9100</text><text xml:space="preserve" x="746.4" y="391.9" font-family="Liberation Mono" font-size="4.6" fill="#1c1c1c" fill-opacity="0.95" textLength="10.5" lengthAdjust="spacingAndGlyphs">50,73</text><text xml:space="preserve" x="761.3" y="391.9" font-family="Liberation Mono" font-size="4.6" fill="#1c1c1c" fill-opacity="0.95" textLength="4.0" lengthAdjust="spacingAndGlyphs">V1</text><text xml:space="preserve" x="501.5" y="524.9" font-family="Liberation Sans" font-size="2.6" fill="#222" fill-opacity="0.72" textLength="31.4" lengthAdjust="spacingAndGlyphs">IMPORTE NETO TOTAL DOCUME</text><text xml:space="preserve" x="544.2" y="524.9" font-family="Liberation Sans" font-size="2.6" fill="#222" fill-opacity="0.72" textLength="46.5" lengthAdjust="spacingAndGlyphs">IMPORTE NETO TOTAL DOCUMENTO CLIENTE </text><text xml:space="preserve" x="614.2" y="524.9" font-family="Liberation Sans" font-size="2.6" fill="#222" fill-opacity="0.72" textLength="38.0" lengthAdjust="spacingAndGlyphs">IMPORTE NETO TOTAL DOCUMENTO C</text><text xml:space="preserve" x="661.0" y="524.9" font-family="Liberation Sans" font-size="2.6" fill="#222" fill-opacity="0.72" textLength="25.0" lengthAdjust="spacingAndGlyphs">IMPORTE NETO TOTAL D</text><text xml:space="preserve" x="694.2" y="524.9" font-family="Liberation Sans" font-size="2.6" fill="#222" fill-opacity="0.72" textLength="41.6" lengthAdjust="spacingAndGlyphs">IMPORTE NETO TOTAL DOCUMENTO CLIE</text><text xml:space="preserve" x="743.8" y="524.9" font-family="Liberation Sans" font-size="2.6" fill="#222" fill-opacity="0.72" textLength="26.2" lengthAdjust="spacingAndGlyphs">IMPORTE NETO TOTAL D</text><text xml:space="preserve" x="525.5" y="532.5" font-family="Liberation Mono" font-size="4.6" fill="#1c1c1c" fill-opacity="0.95" textLength="10.9" lengthAdjust="spacingAndGlyphs">50,73</text><text xml:space="preserve" x="501.8" y="540.1" font-family="Liberation Sans" font-size="2.6" fill="#222" fill-opacity="0.72" textLength="17.7" lengthAdjust="spacingAndGlyphs">IMPORTE NETO T</text><text xml:space="preserve" x="522.6" y="540.1" font-family="Liberation Sans" font-size="2.6" fill="#222" fill-opacity="0.72" textLength="41.0" lengthAdjust="spacingAndGlyphs">IMPORTE NETO TOTAL DOCUMENTO CLI</text><text xml:space="preserve" x="676.1" y="540.1" font-family="Liberation Sans" font-size="2.6" fill="#222" fill-opacity="0.72" textLength="33.5" lengthAdjust="spacingAndGlyphs">IMPORTE NETO TOTAL DOCUMEN</text><text xml:space="preserve" x="716.3" y="540.1" font-family="Liberation Sans" font-size="2.6" fill="#222" fill-opacity="0.72" textLength="14.2" lengthAdjust="spacingAndGlyphs">IMPORTE NET</text><text xml:space="preserve" x="742.8" y="540.1" font-family="Liberation Sans" font-size="2.6" fill="#222" fill-opacity="0.72" textLength="24.2" lengthAdjust="spacingAndGlyphs">IMPORTE NETO TOTAL </text><text xml:space="preserve" x="502.1" y="546.1" font-family="Liberation Mono" font-size="4.6" fill="#1c1c1c" fill-opacity="0.95" textLength="4.1" lengthAdjust="spacingAndGlyphs">V1</text><text xml:space="preserve" x="522.0" y="546.1" font-family="Liberation Mono" font-size="4.6" fill="#1c1c1c" fill-opacity="0.95" textLength="17.4" lengthAdjust="spacingAndGlyphs">IVA 21 %</text><text xml:space="preserve" x="701.4" y="546.1" font-family="Liberation Mono" font-size="4.6" fill="#1c1c1c" fill-opacity="0.95" textLength="10.8" lengthAdjust="spacingAndGlyphs">50,73</text><text xml:space="preserve" x="720.8" y="546.1" font-family="Liberation Mono" font-size="4.6" fill="#1c1c1c" fill-opacity="0.95" textLength="11.3" lengthAdjust="spacingAndGlyphs">21,00</text><text xml:space="preserve" x="761.8" y="546.1" font-family="Liberation Mono" font-size="4.6" fill="#1c1c1c" fill-opacity="0.95" textLength="10.3" lengthAdjust="spacingAndGlyphs">10,65</text><text xml:space="preserve" x="501.8" y="565.8" font-family="Liberation Sans" font-size="2.6" fill="#222" fill-opacity="0.72" textLength="27.0" lengthAdjust="spacingAndGlyphs">IMPORTE NETO TOTAL DO</text><text xml:space="preserve" x="597.2" y="565.8" font-family="Liberation Sans" font-size="2.6" fill="#222" fill-opacity="0.72" textLength="44.7" lengthAdjust="spacingAndGlyphs">IMPORTE NETO TOTAL DOCUMENTO CLIENT</text><text xml:space="preserve" x="716.7" y="565.3" font-family="Liberation Sans" font-size="2.9" fill="#1c1c1c" fill-opacity="0.8" textLength="32.8" lengthAdjust="spacingAndGlyphs" font-weight="bold">TOTAL / TOTAL INVOICE</text><text xml:space="preserve" x="718.4" y="570.8" font-family="Liberation Mono" font-size="4.6" fill="#1c1c1c" fill-opacity="0.95" textLength="6.5" lengthAdjust="spacingAndGlyphs">EUR</text><text xml:space="preserve" x="750.5" y="570.8" font-family="Liberation Mono" font-size="4.6" fill="#1c1c1c" fill-opacity="0.95" textLength="11.3" lengthAdjust="spacingAndGlyphs">61,38</text><text xml:space="preserve" x="508.7" y="582.3" font-family="Liberation Sans" font-size="2.6" fill="#222" fill-opacity="0.72" textLength="35.9" lengthAdjust="spacingAndGlyphs">IMPORTE NETO TOTAL DOCUMENTO</text><text xml:space="preserve" x="686.0" y="582.3" font-family="Liberation Sans" font-size="2.6" fill="#222" fill-opacity="0.72" textLength="20.5" lengthAdjust="spacingAndGlyphs">IMPORTE NETO TOT</text><text xml:space="preserve" x="730.0" y="582.3" font-family="Liberation Sans" font-size="2.6" fill="#222" fill-opacity="0.72" textLength="31.8" lengthAdjust="spacingAndGlyphs">IMPORTE NETO TOTAL DOCUME</text><text xml:space="preserve" x="730.0" y="584.6" font-family="Liberation Sans" font-size="2.6" fill="#222" fill-opacity="0.72" textLength="31.8" lengthAdjust="spacingAndGlyphs">IMPORTE NETO TOTAL DOCUME</text><path d="M503.6 580.5V606.5" stroke="#333" stroke-width=".5" stroke-dasharray=".8 .8" fill="none"/><text xml:space="preserve" x="501.8" y="611.0" font-family="Liberation Sans" font-size="2.6" fill="#222" fill-opacity="0.72" textLength="47.9" lengthAdjust="spacingAndGlyphs">IMPORTE NETO TOTAL DOCUMENTO CLIENTE I</text><text xml:space="preserve" x="616.9" y="611.0" font-family="Liberation Sans" font-size="2.6" fill="#222" fill-opacity="0.72" textLength="35.9" lengthAdjust="spacingAndGlyphs">IMPORTE NETO TOTAL DOCUMENTO</text><text xml:space="preserve" x="674.1" y="611.0" font-family="Liberation Sans" font-size="2.6" fill="#222" fill-opacity="0.72" textLength="26.2" lengthAdjust="spacingAndGlyphs">IMPORTE NETO TOTAL D</text><text xml:space="preserve" x="703.4" y="611.0" font-family="Liberation Sans" font-size="2.6" fill="#222" fill-opacity="0.72" textLength="32.4" lengthAdjust="spacingAndGlyphs">IMPORTE NETO TOTAL DOCUME</text><text xml:space="preserve" x="501.8" y="622.9" font-family="Liberation Sans" font-size="2.6" fill="#222" fill-opacity="0.72" textLength="45.8" lengthAdjust="spacingAndGlyphs">IMPORTE NETO TOTAL DOCUMENTO CLIENTE</text><text xml:space="preserve" x="566.1" y="622.9" font-family="Liberation Sans" font-size="2.6" fill="#222" fill-opacity="0.72" textLength="43.0" lengthAdjust="spacingAndGlyphs">IMPORTE NETO TOTAL DOCUMENTO CLIEN</text><text xml:space="preserve" x="650.5" y="622.9" font-family="Liberation Sans" font-size="2.6" fill="#222" fill-opacity="0.72" textLength="49.8" lengthAdjust="spacingAndGlyphs">IMPORTE NETO TOTAL DOCUMENTO CLIENTE IM</text><text xml:space="preserve" x="762.8" y="622.9" font-family="Liberation Sans" font-size="2.6" fill="#222" fill-opacity="0.72" textLength="12.3" lengthAdjust="spacingAndGlyphs">IMPORTE N</text><text xml:space="preserve" x="768.2" y="628.8" font-family="Liberation Mono" font-size="4.6" fill="#1c1c1c" fill-opacity="0.95" textLength="1.8" lengthAdjust="spacingAndGlyphs">1</text><text xml:space="preserve" x="501.6" y="640.9" font-family="Liberation Mono" font-size="5" fill="#1c1c1c" fill-opacity="0.95" textLength="52.2" lengthAdjust="spacingAndGlyphs">Vencimientos: 17/11/2025</text><text xml:space="preserve" x="501.6" y="647.8" font-family="Liberation Mono" font-size="4.8" fill="#1c1c1c" fill-opacity="0.95" textLength="75.8" lengthAdjust="spacingAndGlyphs">KAIXA BANK ES2121000617500200094650</text><text xml:space="preserve" x="590.3" y="647.8" font-family="Liberation Mono" font-size="4.8" fill="#1c1c1c" fill-opacity="0.95" textLength="57.8" lengthAdjust="spacingAndGlyphs">TF.ADMON.CLIENTES 976971119</text><text xml:space="preserve" x="684.5" y="647.8" font-family="Liberation Mono" font-size="4.8" fill="#1c1c1c" fill-opacity="0.95" textLength="55.4" lengthAdjust="spacingAndGlyphs">TF.ADMON.GENERAL 976971119</text><text xml:space="preserve" x="503.0" y="658.5" font-family="Liberation Sans" font-size="3.1" fill="#1c1c1c" fill-opacity="0.8" textLength="272.1" lengthAdjust="spacingAndGlyphs">Esprinet Ibérica, S.L., Sociedad Unipersonal. Inscrita en el Registro Mercantil de Zaragoza, tomo 3497, folio 196, hoja nº Z-42098. NIF: B-84442993, VAT number: ESB84442993</text><text xml:space="preserve" x="528.2" y="662.6" font-family="Liberation Sans" font-size="3.1" fill="#1c1c1c" fill-opacity="0.85" textLength="221.3" lengthAdjust="spacingAndGlyphs" font-weight="bold">"Empresa integrada en un sistema de Gestión Integral de Residuos, contribuyendo por todos los productos incluidos en esta factura"</text><text xml:space="preserve" x="524.1" y="666.9" font-family="Liberation Sans" font-size="3.1" fill="#1c1c1c" fill-opacity="0.8" textLength="229.5" lengthAdjust="spacingAndGlyphs">Número de registro RII-AEE: 2274, Registro RII-PYA número 67 , Nº adhesión al SIG de Ecoembes 19648, Nº de registro RAP - ENV/2023/000002663</text></svg>
</div>
<style>
.inp{position:absolute;background:#fff;border:2px solid #dee0e0;border-radius:5px;font-size:13px;line-height:16px;color:#1f1f1f;white-space:nowrap;overflow:hidden;display:flex;align-items:center;padding:2px 8px 0 8px;box-shadow:none}
.inp.r{justify-content:flex-end}
.chev{position:absolute;right:4px;top:50%;margin-top:-2px}
.dotb{position:absolute;width:24px;background:#ebebeb;border-radius:5px}
.dotb i{position:absolute;left:10.800px;width:2.500px;height:2.500px;border-radius:50%;background:#777}
.cb{position:absolute;top:448px;width:14px;height:14px;background:#fff;border:1px solid #bdbdbd}
.cbl{position:absolute;top:448px;font-size:13px;line-height:16px;white-space:nowrap;color:#1f1f1f;letter-spacing:-.05px}
</style>
<div class="abs" style="left:963px;top:176px;font-weight:bold;font-size:12px;line-height:14px;white-space:nowrap;color:#1c1c1c;letter-spacing:.035px">Detalle - Archivo escaneado 27/10/25 8:13 - Revisa los campos antes de crear el documento</div>
<div class="abs" style="left:955px;top:191px;width:826px;height:296px;background:#fafafa;border-radius:7px"></div>

<!-- row1 -->
<div class="lbl" style="left:970px;top:214px">Proveedor</div>
<div class="dotb" style="left:1076px;top:206px;height:32px"><i style="top:9px"></i><i style="top:14.500px"></i><i style="top:20px"></i></div>
<div class="inp" style="left:1101px;top:206px;width:255px;height:32px;letter-spacing:-.2px">ESPRINET IBÉRICA S.L.U.<svg class="chev" width="8" height="5" viewBox="0 0 8 5"><path d="M.8 .8l3.200 3.200L7.200 .8" fill="none" stroke="#6e6e6e" stroke-width="1.050"/></svg></div>

<!-- row2 -->
<div class="lbl" style="left:970px;top:252px">Codigo</div>
<div class="inp" style="left:1076px;top:244px;width:120px;height:32px;letter-spacing:-.12px">V025250243</div>
<div class="lbl" style="left:1362px;top:252px">Moneda</div>
<div class="dotb" style="left:1486px;top:244px;height:32px"><i style="top:9px"></i><i style="top:14.500px"></i><i style="top:20px"></i></div>
<div class="inp" style="left:1511px;top:244px;width:125px;height:32px">Euro<svg class="chev" width="8" height="5" viewBox="0 0 8 5"><path d="M.8 .8l3.200 3.200L7.200 .8" fill="none" stroke="#6e6e6e" stroke-width="1.050"/></svg></div>

<!-- row3 -->
<div class="lbl" style="left:970px;top:290px;width:100px">Fecha de Proveedor</div>
<div class="inp r" style="left:1076px;top:282px;width:120px;height:32px;padding-right:17px">16/10/25<svg class="chev" width="8" height="5" viewBox="0 0 8 5"><path d="M.8 .8l3.200 3.200L7.200 .8" fill="none" stroke="#6e6e6e" stroke-width="1.050"/></svg></div>
<div class="lbl" style="left:1362px;top:290px">Fecha de vencimiento</div>
<div class="inp r" style="left:1486px;top:282px;width:150px;height:32px;padding-right:17px">17/11/25<svg class="chev" width="8" height="5" viewBox="0 0 8 5"><path d="M.8 .8l3.200 3.200L7.200 .8" fill="none" stroke="#6e6e6e" stroke-width="1.050"/></svg></div>

<!-- row4 -->
<div class="lbl" style="left:970px;top:329px;width:80px">Forma de pago</div>
<div class="dotb" style="left:1076px;top:320px;height:34px"><i style="top:10px"></i><i style="top:15.500px"></i><i style="top:21px"></i></div>
<div class="inp" style="left:1101px;top:320px;width:255px;height:34px">Recibo 30 días fecha/factura<svg class="chev" width="8" height="5" viewBox="0 0 8 5"><path d="M.8 .8l3.200 3.200L7.200 .8" fill="none" stroke="#6e6e6e" stroke-width="1.050"/></svg></div>
<div class="lbl" style="left:1362px;top:329px">Serie</div>
<div class="inp" style="left:1486px;top:320px;width:120px;height:34px">Serie A</div>

<!-- row5 -->
<div class="lbl" style="left:970px;top:369px">Almacén</div>
<div class="inp" style="left:1076px;top:360px;width:280px;height:34px">Gestiomatica Reus<svg class="chev" width="8" height="5" viewBox="0 0 8 5"><path d="M.8 .8l3.200 3.200L7.200 .8" fill="none" stroke="#6e6e6e" stroke-width="1.050"/></svg></div>
<div class="lbl" style="left:1362px;top:369px;width:50px">Categoría</div>
<div class="dotb" style="left:1486px;top:360px;height:34px"><i style="top:10px"></i><i style="top:15.500px"></i><i style="top:21px"></i></div>
<div class="inp" style="left:1511px;top:360px;width:255px;height:34px"><svg class="chev" width="8" height="5" viewBox="0 0 8 5"><path d="M.8 .8l3.200 3.200L7.200 .8" fill="none" stroke="#6e6e6e" stroke-width="1.050"/></svg></div>

<!-- row6 -->
<div class="lbl" style="left:1362px;top:408px;width:80px">Cuenta contable</div>
<div class="dotb" style="left:1486px;top:400px;height:32px"><i style="top:9px"></i><i style="top:14.500px"></i><i style="top:20px"></i></div>
<div class="inp" style="left:1511px;top:400px;width:255px;height:32px"><svg class="chev" width="8" height="5" viewBox="0 0 8 5"><path d="M.8 .8l3.200 3.200L7.200 .8" fill="none" stroke="#6e6e6e" stroke-width="1.050"/></svg></div>

<!-- checkboxes -->
<div class="cb" style="left:970px"><svg width="12" height="12" viewBox="0 0 12 12" style="position:absolute;left:0;top:0"><path d="M2.200 6.200l3.200 4L9.600 2" fill="none" stroke="#111" stroke-width="1.700"/></svg></div>
<div class="cbl" style="left:990px">¿Usar articulo?</div>
<div class="cb" style="left:1089px"><svg width="12" height="12" viewBox="0 0 12 12" style="position:absolute;left:0;top:0"><path d="M2.200 6.200l3.200 4L9.600 2" fill="none" stroke="#111" stroke-width="1.700"/></svg></div>
<div class="cbl" style="left:1108px">Gestion de lineas</div>
<div class="cb" style="left:1221px"><svg width="12" height="12" viewBox="0 0 12 12" style="position:absolute;left:0;top:0"><path d="M2.200 6.200l3.200 4L9.600 2" fill="none" stroke="#111" stroke-width="1.700"/></svg></div>
<div class="cbl" style="left:1240px">¿El descuento es porcentaje?</div>
<div class="btn" style="left:1667px;top:439px;width:98px;height:32px;line-height:34px">Por IVA</div>

<!-- tabs -->
<div class="abs" style="left:955px;top:527px;width:826px;height:1px;background:#dcdcdc"></div>
<div class="abs" style="left:964px;top:499px;width:59px;height:28px;background:#fafafa;border-radius:5px 5px 0 0"></div>
<div class="abs" style="left:973px;top:506px;font-weight:bold;font-size:13px;line-height:16px;color:#1f1f1f;letter-spacing:-.1px">Lineas</div>
<div class="abs" style="left:1041px;top:506px;font-size:13px;line-height:16px;color:#777">Observaciones</div>
<style>
.tb{position:absolute;top:556px;width:30px;height:30px;background:#ececec;border-radius:4px}
.tb svg{position:absolute;left:0;top:0}
.tl2{position:absolute;font-size:12px;line-height:16px;white-space:nowrap;color:#1f1f1f;top:888px}
.ti{position:absolute;top:880px;height:32px;background:#fff;border:2px solid #dee0e0;border-radius:5px;font-size:13px;line-height:16px;color:#1f1f1f;white-space:nowrap;overflow:hidden;display:flex;align-items:center;justify-content:flex-end;padding:2px 4px 0 4px}
</style>
<!-- splitter grip -->
<div class="abs" style="left:944px;top:573px;width:1px;height:17px;background:repeating-linear-gradient(#c9c9c9 0 1px,transparent 1px 3px)"></div>
<!-- toolbar buttons -->
<div class="tb" style="left:971px"><svg width="30" height="30" viewBox="0 0 30 30"><path d="M15 9.500v11M9.500 15h11" stroke="#5f5f5f" stroke-width="1.200" fill="none"/></svg></div>
<div class="tb" style="left:1009px"><svg width="30" height="30" viewBox="0 0 30 30"><path d="M11.200 16.800l3.800-3.800 3.800 3.800" stroke="#5f5f5f" stroke-width="1.200" fill="none"/></svg></div>
<div class="tb" style="left:1047px"><svg width="30" height="30" viewBox="0 0 30 30"><path d="M11.200 13.400l3.800 3.800 3.800-3.800" stroke="#5f5f5f" stroke-width="1.200" fill="none"/></svg></div>
<div class="tb" style="left:1085px"><svg width="30" height="30" viewBox="0 0 30 30"><g transform="translate(7 7) scale(.667)"><path fill="#5f5f5f" d="M3 17.250V21h3.750L17.810 9.940l-3.750-3.750L3 17.250zM20.710 7.040c.390-.390.390-1.020 0-1.410l-2.340-2.340c-.390-.390-1.020-.390-1.410 0l-1.830 1.830 3.750 3.750 1.830-1.830z"/></g></svg></div>
<div class="tb" style="left:1123px"><svg width="30" height="30" viewBox="0 0 30 30"><circle cx="15" cy="10" r="1.300" fill="#5f5f5f"/><circle cx="15" cy="15" r="1.300" fill="#5f5f5f"/><circle cx="15" cy="20" r="1.300" fill="#5f5f5f"/></svg></div>

<!-- header -->
<div class="th" style="left:994px">N/Referencia</div>
<svg class="abs" style="left:1132px;top:608px" width="10" height="6" viewBox="0 0 10 6"><path d="M.6 .5h8.800L5 5.200z" fill="#3a3a3a"/></svg>
<div class="th" style="left:1156px;letter-spacing:-.06px">Descripción de línea</div>
<div class="th" style="left:1317px">Cant.</div>
<div class="th" style="left:1390px">Precio</div>
<div class="abs" style="left:1448px;top:608px;width:64px;height:16px;overflow:hidden"><div class="th" style="right:2px;top:0;left:auto">Imp. bruto</div></div>
<div class="th" style="left:1528px">Descuento</div>
<div class="th" style="left:1660px">IVA</div>
<div class="th" style="left:1730px">Total</div>
<div class="abs" style="left:988px;top:631px;width:784px;height:1px;background:#dedede"></div>
<!-- row header cell -->
<div class="abs" style="left:964px;top:632px;width:24px;height:30px;background:#f9f9f9;border-right:1px solid #c8c8c8;border-bottom:1px solid #c8c8c8"></div>
<div class="td" style="left:991px">C12C934591</div>
<div class="td" style="left:1153px">Epson C12C934591 caj…</div>
<div class="td" style="right:496px">3,00</div>
<div class="td" style="right:416px">21,900€</div>
<div class="td" style="right:336px">50,73€</div>
<div class="td" style="right:251px">0,00</div>
<div class="td" style="left:1644px">General</div>
<div class="td" style="right:86px">61,38€</div>

<!-- footer -->
<div class="abs" style="left:967px;top:797px;width:805px;height:1px;background:#d4d4d4"></div>
<div class="th" style="left:994px;top:812px">1</div>
<div class="th" style="left:1477px;top:812px">50,73</div>
<div class="th" style="left:1727px;top:812px">61,38</div>

<!-- totals panel -->
<div class="abs" style="left:955px;top:865px;width:826px;height:62px;background:#fafafa;border-radius:7px"></div>
<div class="tl2" style="left:970px">Dto.</div>
<div class="ti" style="left:999px;width:80px;padding-right:5px">0,000%</div>
<div class="tl2" style="left:1085px;letter-spacing:-.2px">Base Gen.(€)</div>
<div class="ti" style="left:1160px;width:70px">50,730€</div>
<div class="tl2" style="left:1236px;letter-spacing:-.1px">Base Tot.(€)</div>
<div class="ti" style="left:1305px;width:90px">50,730€</div>
<div class="tl2" style="left:1401px;letter-spacing:-.18px">Total IVA(€)</div>
<div class="ti" style="left:1467px;width:90px">10,650€</div>
<div class="tl2" style="left:1563px;font-weight:bold;top:889px;letter-spacing:-.15px">Total(€)</div>
<div class="ti" style="left:1611px;width:90px;font-weight:bold">61,38€</div>

<!-- bottom row -->
<div class="tl2" style="left:964px;top:951px">Tipo de scanner</div>
<div class="inp" style="left:1064px;top:943px;width:140px;height:32px;padding-left:6px">Factura de compra<svg class="chev" width="8" height="5" viewBox="0 0 8 5"><path d="M.8 .8l3.200 3.200L7.200 .8" fill="none" stroke="#6e6e6e" stroke-width="1.050"/></svg></div>
<div class="abs" style="left:1210px;top:943px;width:150px;height:32px;background:#59a6f6;border-radius:5px;overflow:hidden"><div class="abs" style="left:-4px;top:9px;width:158px;text-align:center;color:#fff;font-weight:bold;font-size:13px;line-height:16px;white-space:nowrap;letter-spacing:.1px">Crear factura de compra</div></div>
<div class="btn" style="left:1601px;top:943px;width:82px;height:32px;line-height:34px">Aceptar</div>
<div class="btn" style="left:1691px;top:944px;width:80px;height:30px;line-height:32px;background:#efeded">Cancelar</div>
</div>
<div id="status"></div>
</div>
</body>
</html>
